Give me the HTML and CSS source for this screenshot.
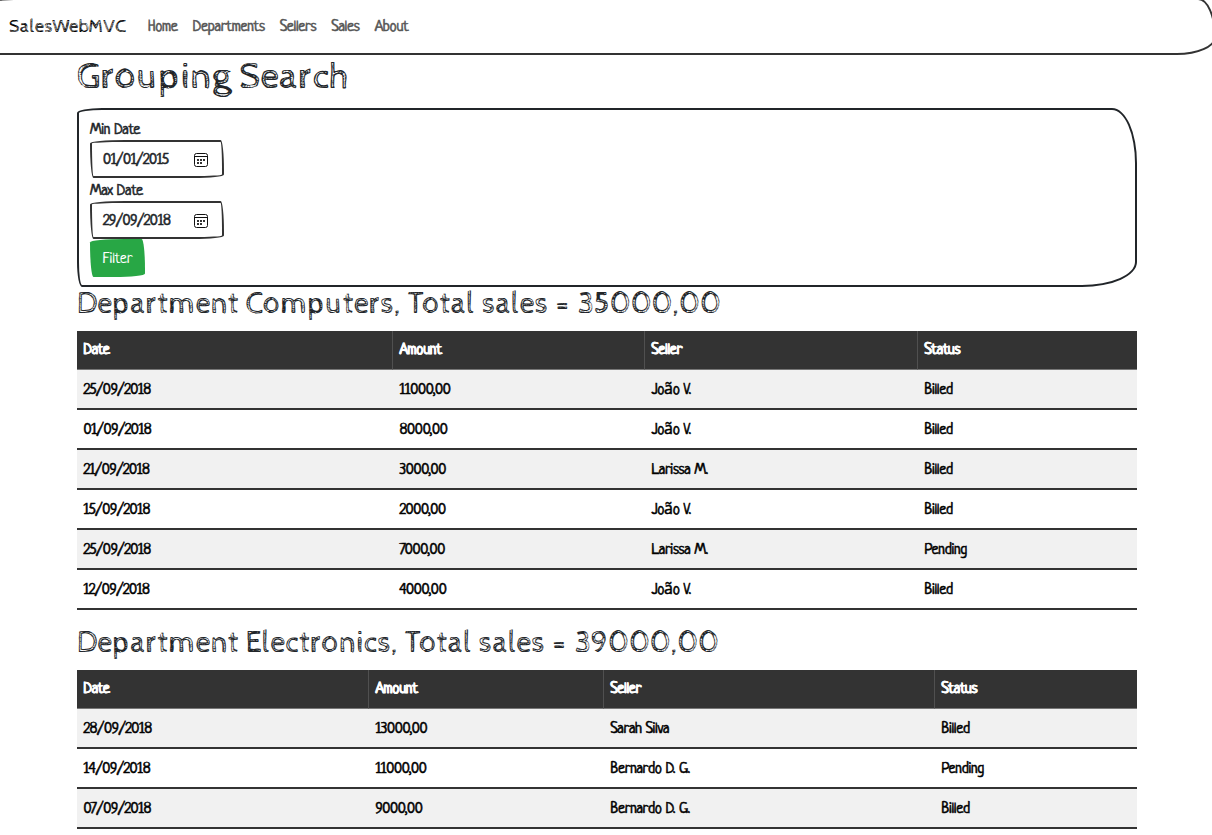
FILE: index.html
```html
<!DOCTYPE html>
<html lang="en">
<head>
<meta charset="utf-8">
<title>Grouping Search - SalesWebMVC</title>
<link rel="stylesheet" href="styles.css">
</head>
<body>
<nav class="navbar">
  <a class="brand">SalesWebMVC</a>
  <a class="link home">Home</a><a class="link departments">Departments</a><a class="link sellers">Sellers</a><a class="link sales">Sales</a><a class="link about">About</a>
</nav>
<main class="container">
  <h1 class="title">Grouping Search</h1>
  <form class="panel">
    <label class="label">Min Date</label>
    <div class="field"><span>01/01/2015</span>
      <svg class="calendar" viewBox="0 0 14 14"><rect x=".5" y=".5" width="13" height="13" rx="2"/><path d="M1 3.5h12"/><path class="dots" d="M6 6h2v2H6zM9 6h2v2H9zM3 6h2v2H3zM3 9h2v2H3zM6 9h2v2H6z"/></svg>
    </div>
    <label class="label">Max Date</label>
    <div class="field"><span>29/09/2018</span>
      <svg class="calendar" viewBox="0 0 14 14"><rect x=".5" y=".5" width="13" height="13" rx="2"/><path d="M1 3.5h12"/><path class="dots" d="M6 6h2v2H6zM9 6h2v2H9zM3 6h2v2H3zM3 9h2v2H3zM6 9h2v2H6z"/></svg>
    </div>
    <button class="button" type="button">Filter</button>
  </form>
  <h2 class="group">Department Computers, Total sales = 35000,00</h2>
  <table class="table computers">
    <colgroup><col class="date"><col class="amount"><col class="seller"><col></colgroup>
    <thead><tr><th>Date</th><th>Amount</th><th>Seller</th><th>Status</th></tr></thead>
    <tbody>
      <tr><td>25/09/2018</td><td>11000,00</td><td>João V.</td><td>Billed</td></tr>
      <tr><td>01/09/2018</td><td>8000,00</td><td>João V.</td><td>Billed</td></tr>
      <tr><td>21/09/2018</td><td>3000,00</td><td>Larissa M.</td><td>Billed</td></tr>
      <tr><td>15/09/2018</td><td>2000,00</td><td>João V.</td><td>Billed</td></tr>
      <tr><td>25/09/2018</td><td>7000,00</td><td>Larissa M.</td><td>Pending</td></tr>
      <tr><td>12/09/2018</td><td>4000,00</td><td>João V.</td><td>Billed</td></tr>
    </tbody>
  </table>
  <h2 class="group second">Department Electronics, Total sales = 39000,00</h2>
  <table class="table electronics">
    <colgroup><col class="date"><col class="amount"><col class="seller"><col></colgroup>
    <thead><tr><th>Date</th><th>Amount</th><th>Seller</th><th>Status</th></tr></thead>
    <tbody>
      <tr><td>28/09/2018</td><td>13000,00</td><td>Sarah Silva</td><td>Billed</td></tr>
      <tr><td>14/09/2018</td><td>11000,00</td><td>Bernardo D. G.</td><td>Pending</td></tr>
      <tr><td>07/09/2018</td><td>9000,00</td><td>Bernardo D. G.</td><td>Billed</td></tr>
    </tbody>
  </table>
</main>
</body>
</html>
```

FILE: styles.css
```css
* { box-sizing: border-box; }
html { overflow: hidden; }
body {
  margin: 0;
  background: #fff;
  color: #212529;
  font: 16px/24px Neucha, "Liberation Sans Narrow", "Open Sans", sans-serif;
  letter-spacing: -.32px;
  -webkit-text-stroke: .5px;
  overflow: hidden;
}
.navbar {
  display: flex;
  align-items: center;
  height: 57px;
  margin: -2px -4px 0;
  padding: 0 11px;
  border: 2px solid #333;
  border-radius: 25px 25px 55px 5px / 5px 55px 25px 25px;
}
.brand {
  width: 131px;
  font: 19px/28px "Cabin Sketch", Lato, sans-serif;
  letter-spacing: .05px;
  color: #000;
  -webkit-text-stroke: 0;
}
.link { color: #555; padding: 2px 7.3px 0 8px; }
.container { width: 1060px; margin: 0 0 0 77px; }
.title, .group {
  margin: 0;
  font-family: "Cabin Sketch", Lato, sans-serif;
  font-weight: 400;
  letter-spacing: 0;
  -webkit-text-stroke: 0;
  white-space: nowrap;
}
.title { height: 53px; font-size: 38px; line-height: 44px; letter-spacing: -.04px; }
.group { height: 44px; font-size: 30.3px; line-height: 36px; letter-spacing: .03px; }
.second { margin-top: 16px; }
.panel {
  height: 179px;
  padding: 7px 11px;
  border: 2px solid #212529;
  border-radius: 25px 25px 55px 5px / 5px 55px 25px 25px;
}
.label { display: block; height: 23px; line-height: 27px; }
.field {
  display: flex;
  align-items: center;
  justify-content: space-between;
  width: 134px;
  height: 38px;
  padding: 0 14px 0 11px;
  border: 2px solid #333;
  border-radius: 255px 25px 225px 25px / 25px 225px 25px 255px;
}
.field span { padding-top: 3px; }
.calendar { width: 14px; height: 14px; margin-top: 1px; fill: none; stroke: #111; stroke-width: 1; }
.calendar .dots { fill: #333; stroke: none; }
.button {
  display: block;
  width: 55px;
  height: 38px;
  padding: 3px 0 0;
  border: 0;
  border-radius: 255px 25px 225px 25px / 25px 225px 25px 255px;
  background: #28a745;
  color: #fff;
  font: inherit;
  letter-spacing: -.1px;
  -webkit-text-stroke: 0;
}
.table { width: 100%; table-layout: fixed; border-spacing: 0; color: #000; }
.computers .date { width: 316px; }
.computers .amount { width: 252px; }
.computers .seller { width: 273px; }
.electronics .date { width: 292px; }
.electronics .amount { width: 235px; }
.electronics .seller { width: 331px; }
.table th, .table td { padding: 3px 6.5px 0; text-align: left; white-space: nowrap; }
.table th {
  height: 39px;
  padding-top: 1px;
  background: #333;
  color: #fff;
  font-weight: 700;
  border-bottom: 1px solid #777;
  border-right: 1px solid #505050;
  -webkit-text-stroke: .2px;
}
.table th:last-child { border-right: 0; }
.table td { height: 40px; border-bottom: 2px solid #333; }
.table tbody tr:nth-child(odd) { background: #f1f1f1; }
```
